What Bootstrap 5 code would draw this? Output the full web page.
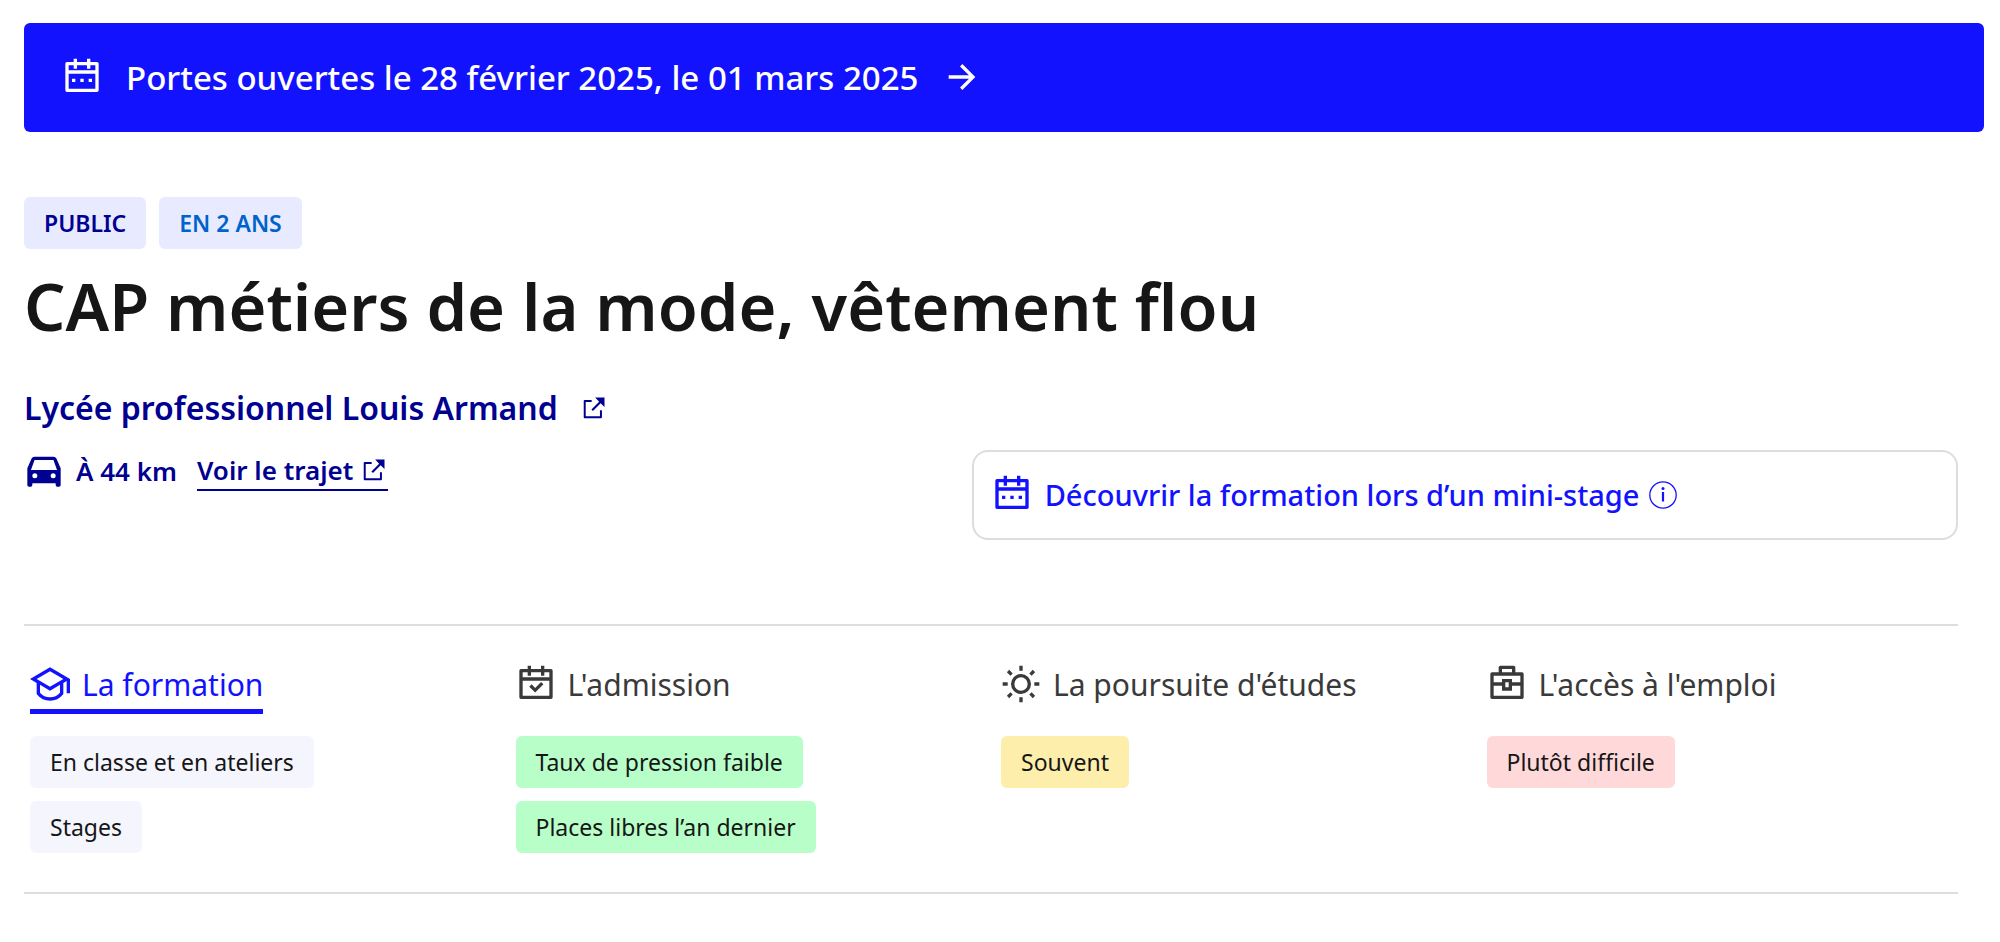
<!DOCTYPE html>
<html lang="fr">
<head>
<meta charset="utf-8">
<meta name="viewport" content="width=device-width, initial-scale=1">
<title>CAP métiers de la mode, vêtement flou</title>
<link href="https://cdn.jsdelivr.net/npm/bootstrap@5.3.0/dist/css/bootstrap.min.css" rel="stylesheet">
<style>
  :root { --electric: #1212ff; --france: #000091; --line: #ddd; --ink: #161616; }
  body { font-family: "Noto Sans", "Open Sans", sans-serif; color: var(--ink); background: #fff; padding: 23px 16px 24px 24px; }
  a { text-decoration: none; }
  .ico { width: 40px; height: 40px; flex: none; fill: currentColor; margin-bottom: 2px; }
  .ico-sm { width: 28px; height: 28px; flex: none; fill: currentColor; }
  .open-days { background: var(--electric); color: #fff; border-radius: 6px; padding: 30px 38px; font-size: 33px; line-height: 49px; font-weight: 500; gap: 24px; }
  .open-days:hover { color: #fff; }
  .page-main { padding-right: 26px; padding-top: 65px; }
  .chip { border-radius: 6px; padding: 0 20px; font-size: 23px; line-height: 52px; }
  .chip-kind { background: #e8ebff; font-weight: 600; }
  .kind-public { color: var(--france); }
  .kind-length { color: #0063cb; }
  .chip-gap { gap: 13px; }
  h1 { font-size: 65px; line-height: 80px; font-weight: 600; margin: 17px 0 38px; }
  .school { color: var(--france); font-size: 32px; line-height: 48px; font-weight: 600; gap: 22px; }
  .place-row { margin-top: 18px; }
  .distance { color: var(--france); font-size: 26px; line-height: 40px; font-weight: 600; gap: 12px; }
  .route { color: var(--france); line-height: 38px; border-bottom: 2px solid var(--france); gap: 7px; margin-left: 8px; }
  .internship { width: 51%; border: 2px solid var(--line); border-radius: 16px; padding: 22px 18px; gap: 13px; background: #fff; color: var(--electric); font-size: 29px; line-height: 40px; font-weight: 500; }
  .internship .ico-sm { fill: none; stroke: currentColor; margin-left: -4px; }
  .topics { margin-top: 84px; border-top: 2px solid var(--line); border-bottom: 2px solid var(--line); padding: 35px 0 39px 6px; }
  .topics .row { --bs-gutter-x: 14px; }
  .topic { color: #3a3a3a; font-size: 30px; line-height: 48px; gap: 12px; border-bottom: 5px solid transparent; margin-bottom: 22px; }
  .topic.active { color: var(--electric); border-color: var(--electric); }
  .chip-neutral { background: #f5f5fe; }
  .chip-good { background: #b8fec9; }
  .chip-medium { background: #fdeeac; }
  .chip-hard { background: #ffd9d9; }
</style>
</head>
<body>
<svg width="0" height="0" class="d-none" aria-hidden="true">
  <symbol id="calendar" viewBox="0 0 24 24"><path fill-rule="evenodd" d="M9 1v2h6V1h2v2h4a1 1 0 0 1 1 1v16a1 1 0 0 1-1 1H3a1 1 0 0 1-1-1V4a1 1 0 0 1 1-1h4V1h2zm11 9H4v9h16v-9zM7 5H4v3h16V5h-3v2h-2V5H9v2H7V5z"/><path d="M6 13h2v2H6zM11 13h2v2h-2zM16 13h2v2h-2z"/></symbol>
  <symbol id="calendar-check" viewBox="0 0 24 24"><path fill-rule="evenodd" d="M9 1v2h6V1h2v2h4a1 1 0 0 1 1 1v16a1 1 0 0 1-1 1H3a1 1 0 0 1-1-1V4a1 1 0 0 1 1-1h4V1h2zm11 9H4v9h16v-9zM7 5H4v3h16V5h-3v2h-2V5H9v2H7V5z"/><path d="M15.04 10.8l1.41 1.41L11.5 17.16l-3.54-3.54 1.42-1.41 2.12 2.12z"/></symbol>
  <symbol id="arrow" viewBox="0 0 24 24"><path d="M16.17 11l-5.36-5.36 1.41-1.42L20 12l-7.78 7.78-1.41-1.42L16.17 13H4v-2z"/></symbol>
  <symbol id="external" viewBox="0 0 24 24"><path d="M10 5.2v1.7H4.9v12.2h12.2V14h1.7v6a.8.8 0 0 1-.8.8H4a.8.8 0 0 1-.8-.8V6a.8.8 0 0 1 .8-.8zM21 3v8.2l-3.3-3.3-6.6 6.6-1.3-1.3 6.6-6.6L13 3z"/></symbol>
  <symbol id="car" viewBox="0 0 24 24"><path fill-rule="evenodd" d="M19 20H5v1a1 1 0 0 1-1 1H3a1 1 0 0 1-1-1V11l2.48-5.79A2 2 0 0 1 6.32 4h11.36a2 2 0 0 1 1.84 1.21L22 11v10a1 1 0 0 1-1 1h-1a1 1 0 0 1-1-1v-1zM4.18 12h15.64l-2.14-6H6.32l-2.14 6zM6.5 17a1.5 1.5 0 1 0 0-3 1.5 1.5 0 0 0 0 3zm11 0a1.5 1.5 0 1 0 0-3 1.5 1.5 0 0 0 0 3z"/></symbol>
  <symbol id="cap" viewBox="0 0 24 24"><path fill-rule="evenodd" d="M4 11.33L0 9l12-7 12 7v8.5h-2v-7.33l-2 1.17v6.68l-.22.27A9.99 9.99 0 0 1 12 22a9.98 9.98 0 0 1-7.78-3.73L4 18v-6.67zM6 12.5v4.79A7.98 7.98 0 0 0 12 20a7.98 7.98 0 0 0 6-2.71V12.5L12 16l-6-3.5zM3.97 9L12 13.69 20.03 9 12 4.31 3.97 9z"/></symbol>
  <symbol id="sun" viewBox="0 0 24 24"><path fill-rule="evenodd" d="M12 18a6 6 0 1 1 0-12 6 6 0 0 1 0 12zm0-2a4 4 0 1 0 0-8 4 4 0 0 0 0 8zM11 1h2v3h-2V1zm0 19h2v3h-2v-3zM3.52 4.93l1.41-1.41 2.12 2.12-1.41 1.41-2.12-2.12zM16.95 18.36l1.41-1.41 2.12 2.12-1.41 1.41-2.12-2.12zM19.07 3.51l1.41 1.42-2.12 2.12-1.41-1.41 2.12-2.13zM5.64 16.95l1.41 1.41-2.12 2.12-1.41-1.41 2.12-2.12zM23 11v2h-3v-2h3zM4 11v2H1v-2h3z"/></symbol>
  <symbol id="briefcase" viewBox="0 0 24 24"><path fill-rule="evenodd" d="M7 5V2a1 1 0 0 1 1-1h8a1 1 0 0 1 1 1v3h4a1 1 0 0 1 1 1v14a1 1 0 0 1-1 1H3a1 1 0 0 1-1-1V6a1 1 0 0 1 1-1h4zm2 0h6V3H9v2zM4 7v4h5V9h6v2h5V7H4zm0 6v6h16v-6h-5v3H9v-3H4zm7-2v3h2v-3h-2z"/></symbol>
  <symbol id="info" viewBox="0 0 28 28"><circle cx="14" cy="14" r="13.2" stroke-width="1.3"/><path d="M14 11v9.5" stroke-width="2.2"/><circle cx="14" cy="7.4" r="1.5" fill="currentColor" stroke="none"/></symbol>
</svg>

<a href="#portes-ouvertes" class="open-days d-flex align-items-center">
  <svg class="ico" aria-hidden="true"><use href="#calendar"/></svg>
  <span>Portes ouvertes le 28 février 2025, le 01 mars 2025</span>
  <svg class="ico" aria-hidden="true"><use href="#arrow"/></svg>
</a>

<main class="page-main">
  <div class="d-flex flex-wrap chip-gap">
    <span class="chip chip-kind kind-public">PUBLIC</span>
    <span class="chip chip-kind kind-length">EN 2 ANS</span>
  </div>
  <h1>CAP métiers de la mode, vêtement flou</h1>
  <a href="#etablissement" class="school d-inline-flex align-items-center">Lycée professionnel Louis Armand
    <svg class="ico-sm" aria-hidden="true"><use href="#external"/></svg></a>

  <div class="place-row d-flex justify-content-between align-items-start">
    <div class="distance d-flex align-items-center">
      <svg class="ico" aria-hidden="true"><use href="#car"/></svg>
      <span>À 44 km</span>
      <a href="#trajet" class="route d-flex align-items-center">Voir le trajet
        <svg class="ico-sm" aria-hidden="true"><use href="#external"/></svg></a>
    </div>
    <button type="button" class="internship d-flex align-items-center text-start">
      <svg class="ico" aria-hidden="true"><use href="#calendar"/></svg>
      <span>Découvrir la formation lors d’un mini-stage</span>
      <svg class="ico-sm" aria-hidden="true"><use href="#info"/></svg>
    </button>
  </div>

  <nav class="topics" aria-label="Rubriques">
    <div class="row">
      <div class="col-3 d-flex flex-column align-items-start">
        <a href="#formation" class="topic active d-flex align-items-center" aria-current="true"><svg class="ico" aria-hidden="true"><use href="#cap"/></svg>La formation</a>
        <div class="d-flex flex-column align-items-start chip-gap">
          <span class="chip chip-neutral">En classe et en ateliers</span>
          <span class="chip chip-neutral">Stages</span>
        </div>
      </div>
      <div class="col-3 d-flex flex-column align-items-start">
        <a href="#admission" class="topic d-flex align-items-center"><svg class="ico" aria-hidden="true"><use href="#calendar-check"/></svg>L'admission</a>
        <div class="d-flex flex-column align-items-start chip-gap">
          <span class="chip chip-good">Taux de pression faible</span>
          <span class="chip chip-good">Places libres l’an dernier</span>
        </div>
      </div>
      <div class="col-3 d-flex flex-column align-items-start">
        <a href="#etudes" class="topic d-flex align-items-center"><svg class="ico" aria-hidden="true"><use href="#sun"/></svg>La poursuite d'études</a>
        <span class="chip chip-medium">Souvent</span>
      </div>
      <div class="col-3 d-flex flex-column align-items-start">
        <a href="#emploi" class="topic d-flex align-items-center"><svg class="ico" aria-hidden="true"><use href="#briefcase"/></svg>L'accès à l'emploi</a>
        <span class="chip chip-hard">Plutôt difficile</span>
      </div>
    </div>
  </nav>
</main>
<script src="https://cdn.jsdelivr.net/npm/bootstrap@5.3.0/dist/js/bootstrap.bundle.min.js"></script>
</body>
</html>
